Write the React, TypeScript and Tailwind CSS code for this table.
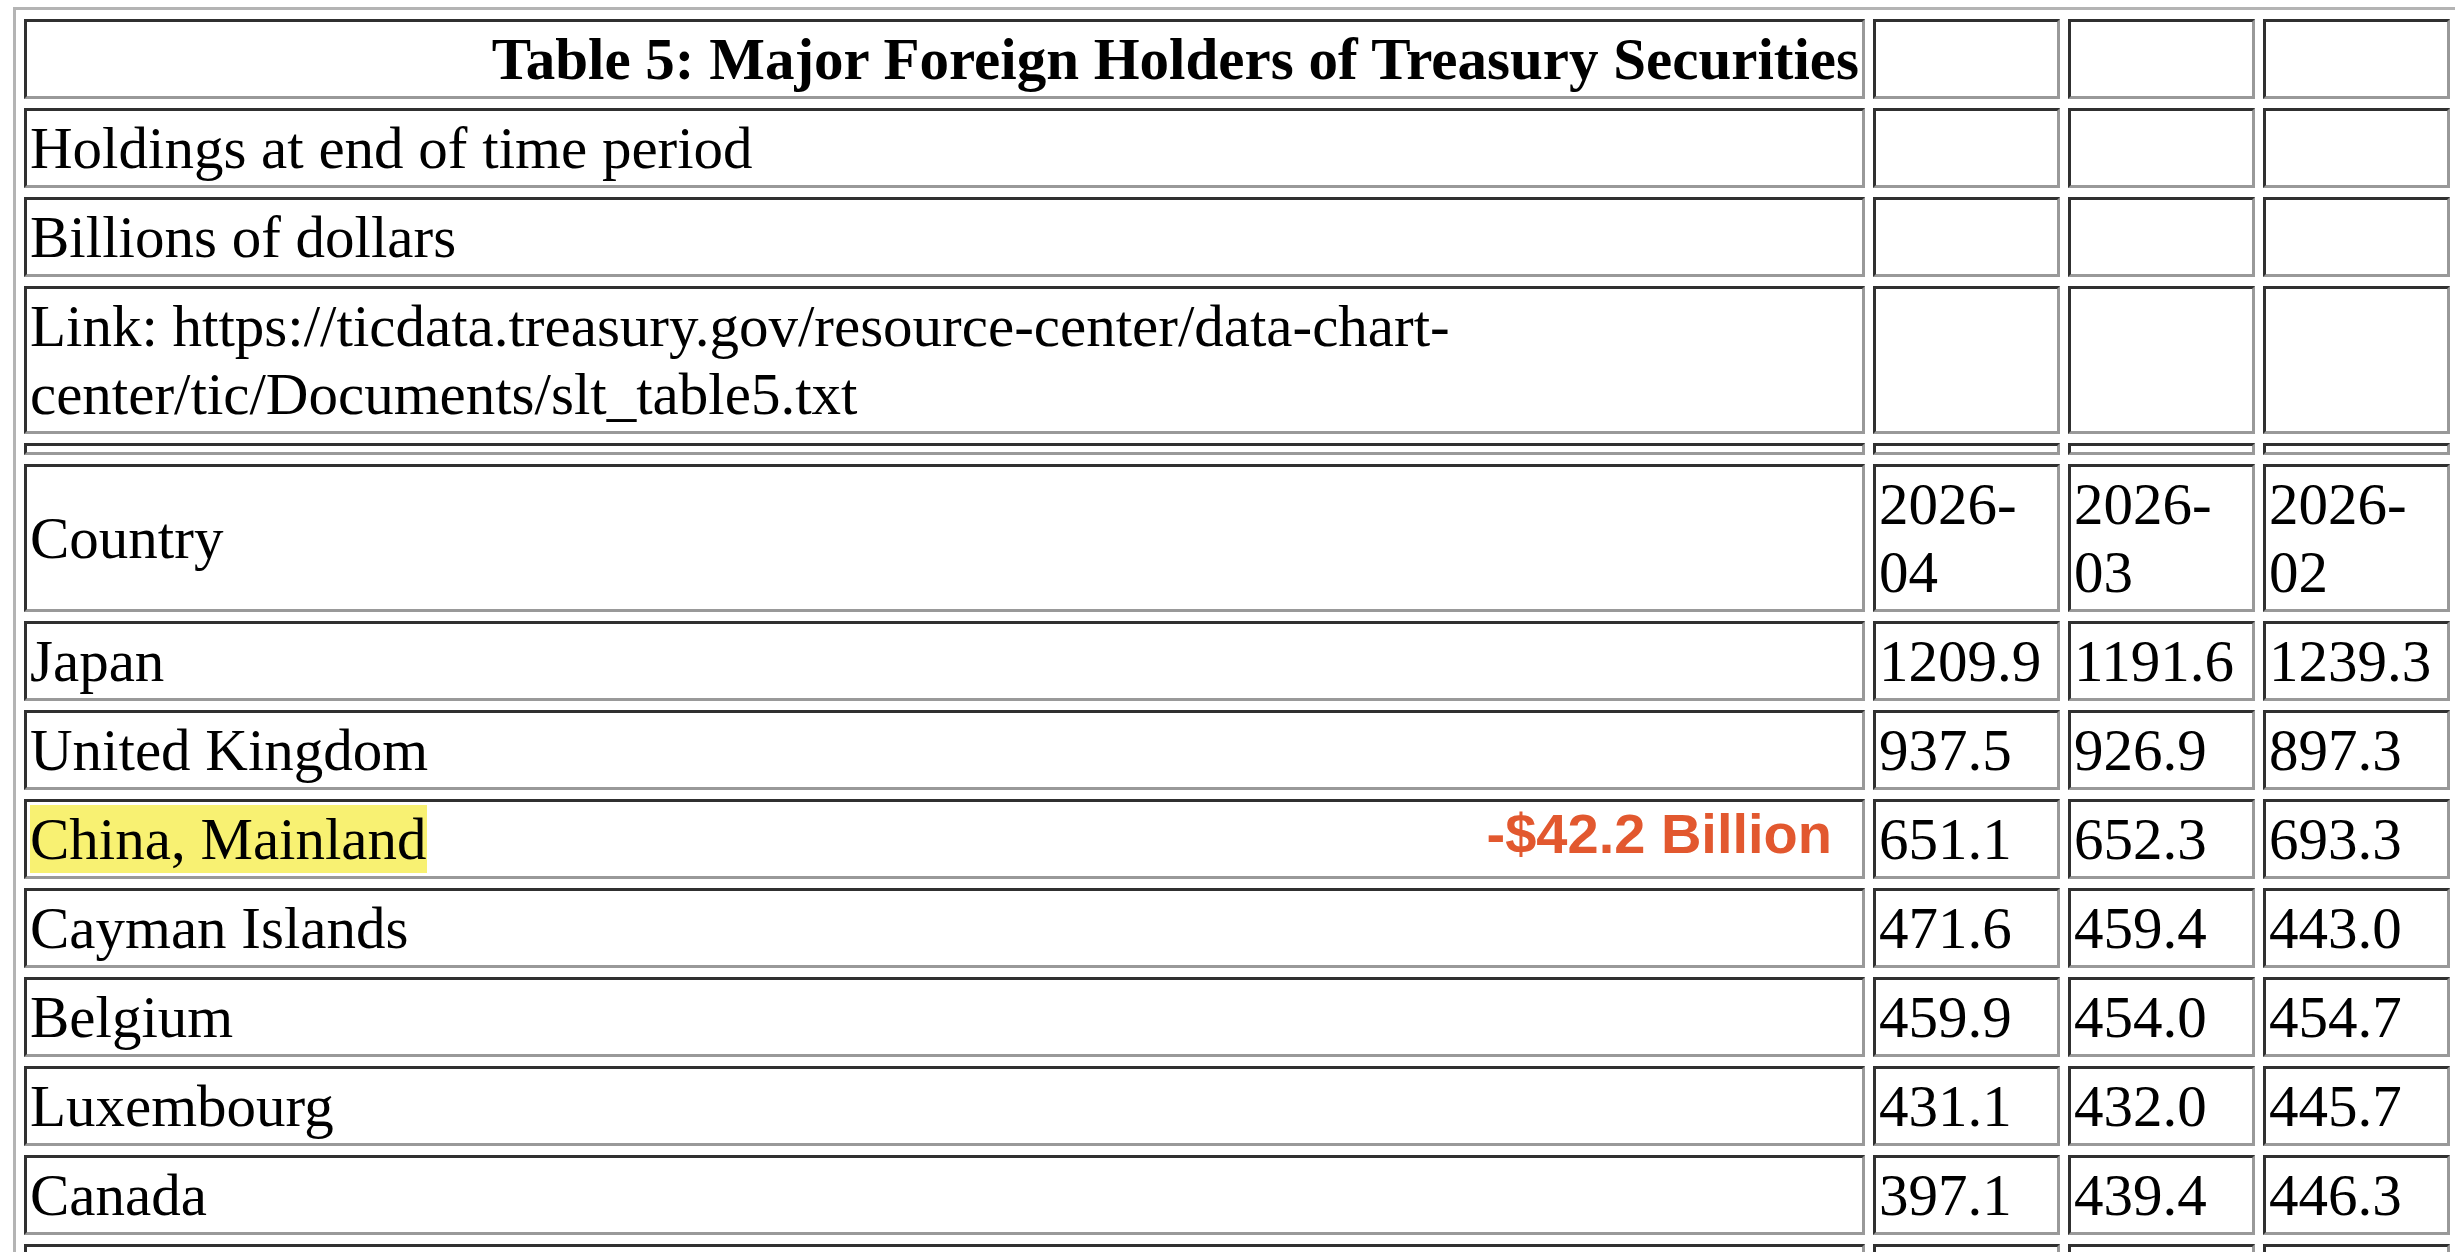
import type { ReactNode } from "react";

const rows = [
  { country: "Japan", values: ["1209.9", "1191.6", "1239.3"] },
  { country: "United Kingdom", values: ["937.5", "926.9", "897.3"] },
  { country: "China, Mainland", values: ["651.1", "652.3", "693.3"], note: "-$42.2 Billion" },
  { country: "Cayman Islands", values: ["471.6", "459.4", "443.0"] },
  { country: "Belgium", values: ["459.9", "454.0", "454.7"] },
  { country: "Luxembourg", values: ["431.1", "432.0", "445.7"] },
  { country: "Canada", values: ["397.1", "439.4", "446.3"] },
];

function Cell({ children, className = "" }: { children?: ReactNode; className?: string }) {
  return (
    <td
      className={`border-[3px] border-t-[#303030] border-l-[#303030] border-r-[#999] border-b-[#999] px-[3px] py-[3px] align-middle ${className}`}
    >
      {children}
    </td>
  );
}

export default function App() {
  return (
    <div className="h-screen w-screen overflow-hidden bg-white">
      <table className="mt-[7px] ml-[13px] w-[2448px] table-fixed border-separate border-spacing-x-[8px] border-spacing-y-[9px] border-[3px] border-t-[#b4b4b4] border-l-[#b4b4b4] border-r-[#555] border-b-[#555] font-['Liberation_Serif','Times_New_Roman',serif] text-[59px] leading-[68px] text-black">
        <tbody>
          {/* header block */}
          <tr>
            <Cell className="w-[1841px] text-right font-bold">
              Table 5: Major Foreign Holders of Treasury Securities
            </Cell>
            <Cell className="w-[187px]" />
            <Cell className="w-[187px]" />
            <Cell className="w-[187px]" />
          </tr>
          <tr>
            <Cell>Holdings at end of time period</Cell>
            <Cell />
            <Cell />
            <Cell />
          </tr>
          <tr>
            <Cell>Billions of dollars</Cell>
            <Cell />
            <Cell />
            <Cell />
          </tr>
          <tr>
            <Cell>
              Link: https://ticdata.treasury.gov/resource-center/data-chart-
              <br />
              center/tic/Documents/slt_table5.txt
            </Cell>
            <Cell />
            <Cell />
            <Cell />
          </tr>
          <tr>
            <Cell />
            <Cell />
            <Cell />
            <Cell />
          </tr>
          <tr>
            <Cell>Country</Cell>
            <Cell>2026-04</Cell>
            <Cell>2026-03</Cell>
            <Cell>2026-02</Cell>
          </tr>
          {rows.map((row) => (
            <tr key={row.country}>
              <Cell>
                {row.note ? (
                  <div className="flex h-[68px] items-center justify-between">
                    <span className="bg-[#f8f172]">{row.country}</span>
                    <span className="mr-[27px] mb-[10px] font-['Liberation_Sans',Arial,sans-serif] text-[56px] leading-[56px] font-bold text-[#e2582f]">
                      {row.note}
                    </span>
                  </div>
                ) : (
                  row.country
                )}
              </Cell>
              {row.values.map((v, i) => (
                <Cell key={i}>{v}</Cell>
              ))}
            </tr>
          ))}
          {/* next row, only its top edge is on screen */}
          <tr>
            <Cell className="h-[80px]" />
            <Cell className="h-[80px]" />
            <Cell className="h-[80px]" />
            <Cell className="h-[80px]" />
          </tr>
        </tbody>
      </table>
    </div>
  );
}
